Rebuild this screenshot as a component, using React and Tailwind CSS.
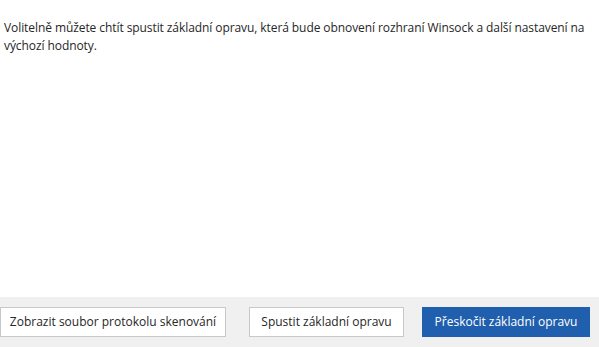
export default function App() {
  return (
    <div className="w-[599px] h-[347px] bg-white flex flex-col text-[#262626]" style={{ fontFamily: '"Open Sans", "Noto Sans", sans-serif' }}>
      <div className="flex-1 pt-[19px] pl-[4px] pr-0 text-[12px] tracking-[-0.08px] leading-[18px]">
        Volitelně můžete chtít spustit základní opravu, která bude obnovení rozhraní Winsock a další nastavení na výchozí hodnoty.
      </div>
      <div className="h-[50px] bg-[#f0f0f0] flex items-start pt-[10px] pr-[9px]">
        <button className="h-[30px] w-[226px] border border-[#c8c8c8] bg-white text-[12px] text-[#262626]">Zobrazit soubor protokolu skenování</button>
        <button className="ml-[23px] h-[30px] w-[155px] border border-[#c8c8c8] bg-white text-[12px] text-[#262626]">Spustit základní opravu</button>
        <button className="ml-[18px] h-[30px] w-[168px] bg-[#1f5fad] text-[12px] text-white">Přeskočit základní opravu</button>
      </div>
    </div>
  );
}
